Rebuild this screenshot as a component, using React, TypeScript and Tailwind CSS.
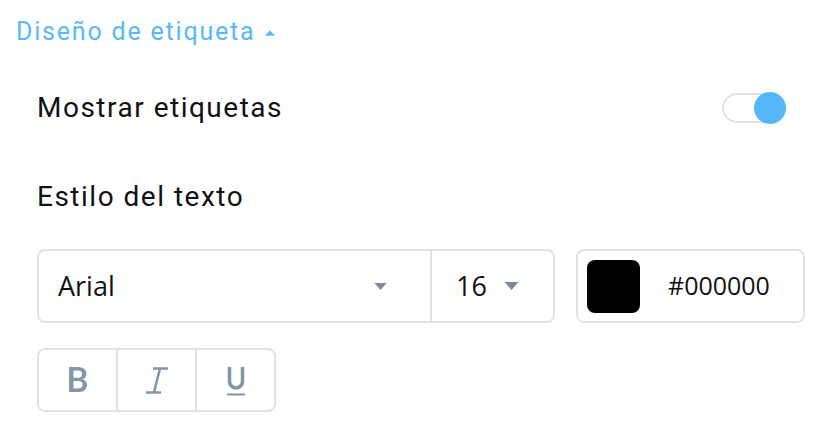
import { useState } from 'react';

function Caret({ up = false, className = '' }: { up?: boolean; className?: string }) {
  return (
    <svg className={className} width="14" height="8" viewBox="0 0 14 8">
      {up ? <path d="M0 8 L7 0 L14 8 Z" fill="currentColor" /> : <path d="M0 0 L7 8 L14 0 Z" fill="currentColor" />}
    </svg>
  );
}

export default function App() {
  const [showLabels, setShowLabels] = useState(true);
  const [bold, setBold] = useState(false);
  const [italic, setItalic] = useState(false);
  const [underline, setUnderline] = useState(false);

  return (
    <div className="w-[830px] h-[434px] bg-white overflow-hidden font-['Roboto',sans-serif]">
      <div className="pl-4 pt-[14px]">
        <button className="flex items-center gap-[10px] text-[25px] leading-[36px] tracking-[1.8px] text-[#5ab8f8]">
          Diseño de etiqueta
          <Caret up className="w-[10px] h-[6px] text-[#5ab8f8] mt-[2px]" />
        </button>
      </div>

      <div className="pl-[37px]">
        {/* Mostrar etiquetas */}
        <div className="flex items-center justify-between mt-[38px] h-[40px] pr-[44px]">
          <span className="text-[28px] tracking-[1.5px] text-[#111]">Mostrar etiquetas</span>
          <button
            onClick={() => setShowLabels(!showLabels)}
            className="relative w-[64px] h-[30px] rounded-full border-2 border-[#e3e3e3] bg-white"
          >
            <span
              className={`absolute top-1/2 -translate-y-1/2 w-[32px] h-[32px] rounded-full bg-[#55b6f8] ${
                showLabels ? 'right-[-2px]' : 'left-[-2px]'
              }`}
            />
          </button>
        </div>

        {/* Estilo del texto */}
        <div className="mt-[49px] text-[28px] tracking-[1.5px] leading-[40px] text-[#111]">Estilo del texto</div>

        <div className="flex gap-[21px] mt-[32px] font-['Open_Sans',sans-serif]">
          <div className="flex w-[518px] h-[74px] border-2 border-[#e3e3e3] rounded-[8px]">
            <div className="flex-1 flex items-center justify-between pl-[19px] pr-[43px]">
              <span className="text-[27px] text-[#111]">Arial</span>
              <Caret className="w-[13px] h-[7px] text-[#7d8b99]" />
            </div>
            <div className="w-[2px] bg-[#e3e3e3]" />
            <div className="w-[121px] flex items-center pl-[24px] gap-[17px]">
              <span className="text-[27px] text-[#111]">16</span>
              <Caret className="w-[15px] h-[8px] text-[#7d8b99]" />
            </div>
          </div>

          <div className="flex items-center w-[229px] h-[74px] border-2 border-[#e3e3e3] rounded-[8px] pl-[9px]">
            <div className="w-[53px] h-[53px] rounded-[8px] bg-black" />
            <span className="ml-[28px] text-[25px] text-[#111]">#000000</span>
          </div>
        </div>

        <div className="flex w-[239px] h-[64px] mt-[25px] border-2 border-[#e3e3e3] rounded-[8px]">
          <button
            onClick={() => setBold(!bold)}
            className={`flex-1 flex items-center justify-center ${bold ? 'bg-[#f2f5f8]' : ''}`}
          >
            <span className="text-[35px] font-['Roboto',sans-serif] font-medium text-[#8396a6] leading-none">B</span>
          </button>
          <div className="w-[2px] bg-[#e3e3e3]" />
          <button
            onClick={() => setItalic(!italic)}
            className={`flex-1 flex items-center justify-center ${italic ? 'bg-[#f2f5f8]' : ''}`}
          >
            <svg width="24" height="27" viewBox="0 0 24 27" className="text-[#8396a6]">
              <path d="M8 1.5 H23 M1 25.5 H16 M15 1.5 L9 25.5" stroke="currentColor" strokeWidth="2.6" fill="none" />
            </svg>
          </button>
          <div className="w-[2px] bg-[#e3e3e3]" />
          <button
            onClick={() => setUnderline(!underline)}
            className={`flex-1 flex items-center justify-center ${underline ? 'bg-[#f2f5f8]' : ''}`}
          >
            <svg width="20" height="30" viewBox="0 0 20 30" className="text-[#8396a6] mt-[2px]">
              <path d="M3.5 1 V15.5 a6.5 6.5 0 0 0 13 0 V1" stroke="currentColor" strokeWidth="3.6" fill="none" />
              <path d="M1 28.5 H19" stroke="currentColor" strokeWidth="2" />
            </svg>
          </button>
        </div>
      </div>
    </div>
  );
}
